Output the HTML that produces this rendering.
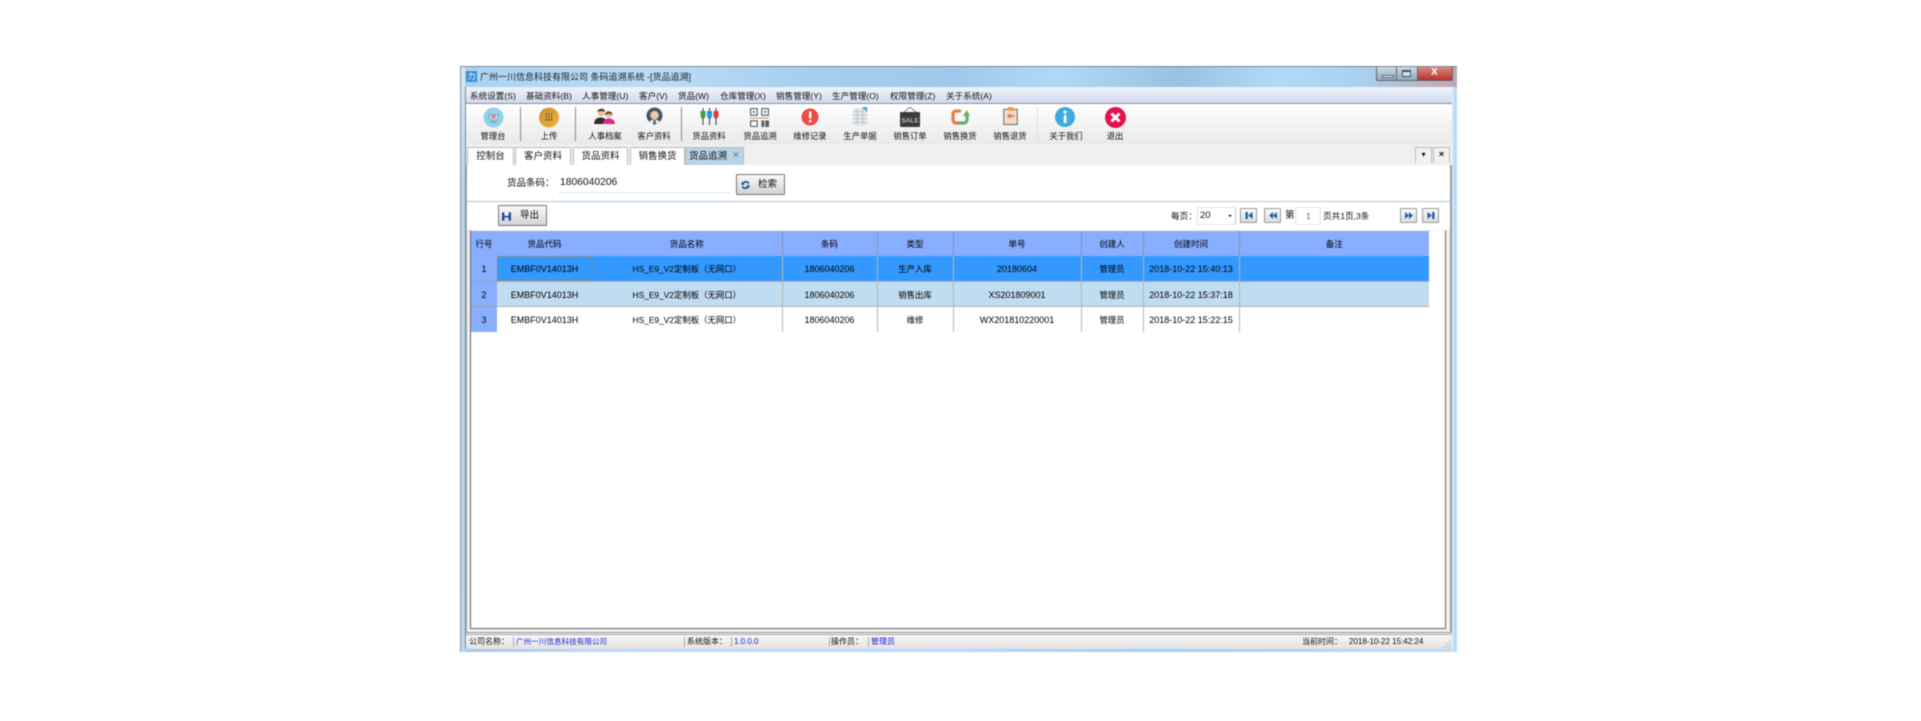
<!DOCTYPE html>
<html lang="zh">
<head>
<meta charset="utf-8">
<title>货品追溯</title>
<style>
html,body{margin:0;padding:0;background:#fff;width:1921px;height:721px;overflow:hidden}
body{font-family:"Liberation Sans","Noto Sans CJK SC",sans-serif;font-size:9px;color:#111;position:relative}
.a{position:absolute}
.t{position:absolute;white-space:nowrap;line-height:12px;font-size:8.6px}
.l{font-size:8.3px}
.s{font-size:8px}
.c{transform:translateX(-50%)}
.sep{position:absolute;width:1px;background:#888}
.tab{position:absolute;top:147px;height:18px;background:#fff;border:1px solid #bbb;border-bottom:none;box-sizing:border-box;text-align:center;line-height:18px;font-size:9.5px}
.btn{position:absolute;box-sizing:border-box;border:1px solid #777;border-radius:1px;background:linear-gradient(#fafafa,#d4d4d4)}
.pg{position:absolute;top:208px;width:17px;height:15px;box-sizing:border-box;border:1px solid #999;border-radius:1px;background:linear-gradient(#fafafa,#dcdcdc)}
svg{position:absolute;display:block}
#wrap{position:absolute;left:0;top:0;width:1921px;height:721px;filter:blur(.45px)}
table{position:absolute;left:471px;top:231px;border-collapse:collapse;table-layout:fixed;width:958px}
td,th{padding:0;text-align:center;font-weight:normal;font-size:9px;height:25px;box-sizing:border-box;white-space:nowrap;overflow:hidden;color:#000}
th{background:#8aaeff;border-right:1px solid #8892a8;font-size:8.5px}
th.n{border-right:none}
td{border-right:1px solid #b4b4b4;border-bottom:1px solid #b4b4b4;padding-top:2px}
td.k{font-size:8.4px}
td.r{background:#8aaeff;border-right:none;border-bottom:1px solid #999}
tr.s1 td{background:#3399ff}
tr.s1 td.r{background:#8aaeff}
tr.s2 td{background:#c0dcf0}
tr.s2 td.r{background:#8aaeff}
tr.s3 td{background:#fff;border-bottom:none;height:26px}
tr.s3 td.r{background:#8aaeff}
td.nb{border-right:none}
</style>
</head>
<body>
<div id="wrap">
<!-- window frame -->
<div class="a" style="left:460px;top:66px;width:997px;height:586px;background:#b5d9f8;border-top:1px solid #7a8a96;box-sizing:border-box"></div>
<div class="a" style="left:460px;top:67px;width:997px;height:20px;background:linear-gradient(90deg,#a8d3f4 0,#bcdcf6 20%,#a5cfef 35%,#9fc9ec 50%,#b2d8f7 60%,#98c2e2 72%,#b2d9f8 82%,#a8d2f2 90%,#c0a8ae 100%)"></div>
<div class="a" style="left:460px;top:67px;width:1px;height:585px;background:#8a9aa8"></div>
<div class="a" style="left:461px;top:67px;width:4px;height:585px;background:linear-gradient(#dbe6ee,#b6d4ec 20%,#b9d6ee)"></div>
<div class="a" style="left:465px;top:87px;width:1px;height:562px;background:#7c8a96"></div>
<div class="a" style="left:1452px;top:87px;width:5px;height:565px;background:linear-gradient(90deg,#e6f1fb,#b5d9f8 50%)"></div>
<div class="a" style="left:466px;top:649px;width:986px;height:3px;background:linear-gradient(90deg,#a8c8e4,#bcdcf8 15%,#b5d9f8 50%,#a8cfee 70%,#bcdcf8)"></div>

<!-- title -->
<div class="a" style="left:466px;top:71px;width:11px;height:11px;background:#3d8fd6;color:#fff;font-size:8px;line-height:11px;text-align:center">力</div>
<div class="t" style="left:480px;top:71px;font-size:9px;color:#222">广州一川信息科技有限公司 条码追溯系统 -[货品追溯]</div>
<!-- window buttons -->
<div class="a" style="left:1376px;top:67px;width:21px;height:14px;box-sizing:border-box;border:1px solid #666;border-top:none;border-radius:0 0 0 2px;background:linear-gradient(#c9dbe8,#8fa9bc)"></div>
<div class="a" style="left:1382px;top:75px;width:10px;height:1px;background:#fff;border:1px solid #567"></div>
<div class="a" style="left:1397px;top:67px;width:21px;height:14px;box-sizing:border-box;border:1px solid #666;border-top:none;border-left:none;background:linear-gradient(#c9dbe8,#8fa9bc)"></div>
<div class="a" style="left:1402px;top:70px;width:9px;height:7px;box-sizing:border-box;border:1px solid #456;border-top-width:2px;background:#cfe0ec"></div>
<div class="a" style="left:1418px;top:67px;width:35px;height:14px;box-sizing:border-box;border:1px solid #666;border-top:none;border-left:none;border-radius:0 0 2px 0;background:linear-gradient(#d98a84,#b8332c)"></div>
<div class="t" style="left:1431px;top:67px;font-size:10px;font-weight:bold;color:#fff">X</div>

<!-- client area -->
<div class="a" style="left:466px;top:87px;width:986px;height:562px;background:#f0f0f0"></div>

<!-- menu -->
<div class="a" style="left:466px;top:88px;width:986px;height:15px;background:linear-gradient(#eef2fa,#d3daee)"></div>
<div class="a" style="left:466px;top:103px;width:986px;height:1px;background:#8a8f98"></div>
<div class="t" style="left:470px;top:90px">系统设置(S)</div>
<div class="t" style="left:526px;top:90px">基础资料(B)</div>
<div class="t" style="left:582px;top:90px">人事管理(U)</div>
<div class="t" style="left:639px;top:90px">客户(V)</div>
<div class="t" style="left:678px;top:90px">货品(W)</div>
<div class="t" style="left:720px;top:90px">仓库管理(X)</div>
<div class="t" style="left:776px;top:90px">销售管理(Y)</div>
<div class="t" style="left:832px;top:90px">生产管理(O)</div>
<div class="t" style="left:890px;top:90px">权限管理(Z)</div>
<div class="t" style="left:946px;top:90px">关于系统(A)</div>

<!-- toolbar -->
<div class="a" style="left:466px;top:104px;width:986px;height:40px;background:linear-gradient(#fff,#e9e9e9)"></div>
<div class="sep" style="left:520px;top:107px;height:34px"></div>
<div class="sep" style="left:575px;top:107px;height:34px"></div>
<div class="sep" style="left:681px;top:107px;height:34px"></div>
<div class="sep" style="left:1037px;top:107px;height:34px;background:#ddd"></div>

<!-- icons -->
<svg style="left:483px;top:107px" width="21" height="21" viewBox="0 0 21 21"><circle cx="10.5" cy="10.5" r="10" fill="#8ed3ee"/><path d="M5.500 7.500h10l-1 5.500H7z" fill="#c0dcea" stroke="#7a9cb0" stroke-width=".8"/><circle cx="10.5" cy="9.500" r="2" fill="#e8748a"/><path d="M7 15h7" stroke="#7a9cb0" stroke-width="1.200"/></svg>
<svg style="left:539px;top:107px" width="20" height="21" viewBox="0 0 20 21"><defs><linearGradient id="g1" x1="0" y1="0" x2="1" y2="1"><stop offset="0" stop-color="#c4902c"/><stop offset="1" stop-color="#f5b53e"/></linearGradient></defs><circle cx="10" cy="10.5" r="10" fill="url(#g1)"/><path d="M7.500 5.500v7M10 5.500v7M12.500 5.500v7M6 13h8" stroke="#8a6420" stroke-width=".9" fill="none"/></svg>
<svg style="left:594px;top:108px" width="21" height="17" viewBox="0 0 22 18"><path d="M0 17c0-5 3-7 7-7s6 2 6 7z" fill="#2d2d2d"/><circle cx="7.500" cy="5" r="3.800" fill="#e8c0a0"/><path d="M3.500 4c0-4 8-4.500 8 0-3-1-5-1-8 0z" fill="#4a3324"/><path d="M9 17c0-4 3-6 6.500-6S22 13 22 17z" fill="#d42a8e"/><circle cx="15.500" cy="7" r="3.500" fill="#ecc4a4"/><path d="M11.500 8c0-6 8-6 8 0-2-2.500-5-2.500-8 0z" fill="#6b4423"/></svg>
<svg style="left:646px;top:107px" width="17" height="19" viewBox="0 0 18 20"><circle cx="9" cy="9" r="8.500" fill="#44586a"/><circle cx="9" cy="8.500" r="4.500" fill="#edc8a8"/><path d="M3 17c1-3 3-4 6-4s5 1 6 4c-3 2.500-9 2.500-12 0z" fill="#e4e8ec"/><path d="M8 13.500h2l.6 5H7.400z" fill="#4a6278"/></svg>
<svg style="left:700px;top:108px" width="19" height="17" viewBox="0 0 19 17"><path d="M3 0v17M9.500 0v17M16 0v17" stroke="#555" stroke-width="1.200"/><rect x=".5" y="3" width="5" height="6" fill="#3ca64a"/><rect x="7" y="3" width="5" height="6" fill="#1e98e8"/><rect x="13.500" y="3" width="5" height="6" fill="#e43a3a"/><path d="M1 9h4l-2 3zM7.500 9h4l-2 3zM14 9h4l-2 3z" fill="#666"/></svg>
<svg style="left:750px;top:108px" width="19" height="19" viewBox="0 0 20 20" fill="#56666c"><rect x=".6" y=".6" width="7" height="7" fill="none" stroke="#56666c" stroke-width="1.200"/><rect x="3" y="3" width="2" height="2"/><rect x="12.400" y=".6" width="7" height="7" fill="none" stroke="#56666c" stroke-width="1.200"/><rect x="15" y="3" width="2" height="2"/><rect x="0" y="10" width="20" height="1" fill="#c49a7a"/><rect x=".6" y="13.500" width="7" height="6" fill="none" stroke="#56666c" stroke-width="1.200"/><rect x="12" y="13" width="3" height="7"/><rect x="16" y="13" width="4" height="7"/></svg>
<svg style="left:801px;top:108px" width="18" height="18" viewBox="0 0 18 18"><circle cx="9" cy="9" r="8.500" fill="#ef4a44"/><rect x="8" y="3.500" width="2.400" height="7" fill="#fff"/><rect x="8" y="12" width="2.400" height="2.400" fill="#fff"/></svg>
<svg style="left:852px;top:107px" width="16" height="19" viewBox="0 0 18 21"><rect x="1" y="1" width="16" height="20" fill="#e6ebed"/><path d="M1 5h16M1 9h16M1 13h16M1 17h16M6 1v20M12 1v20" stroke="#b6c0c4" stroke-width="1"/><path d="M11 0h6v5z" fill="#3d9bd8"/></svg>
<svg style="left:900px;top:106px" width="20" height="21" viewBox="0 0 20 21"><path d="M10 1L3 7M10 1l7 6" stroke="#555" stroke-width=".8" fill="none"/><rect x="0" y="6" width="20" height="15" rx="1" fill="#3b3b3b"/><text x="10" y="16.500" font-family="Liberation Sans,sans-serif" font-size="6.500" font-weight="bold" text-anchor="middle" fill="#bbb">SALE</text></svg>
<svg style="left:951px;top:108px" width="19" height="18" viewBox="0 0 19 18"><path d="M10 3H5a3 3 0 0 0-3 3v6a3 3 0 0 0 3 3h2" fill="none" stroke="#ef7a45" stroke-width="3.200"/><path d="M7 15h6a3 3 0 0 0 3-3V7" fill="none" stroke="#68b06a" stroke-width="3.200"/><path d="M12 8l3.800-6L19 8z" fill="#68b06a"/></svg>
<svg style="left:1003px;top:107px" width="15" height="18" viewBox="0 0 16 20"><rect x=".5" y="2.500" width="15" height="17" fill="#ecdcc8" stroke="#6a5a4a"/><rect x="5" y="0" width="6" height="4" fill="#f0a030"/><path d="M4 10l4-3v2h4v2H8v2z" fill="#ef6a3a"/></svg>
<svg style="left:1055px;top:107px" width="20" height="20" viewBox="0 0 20 20"><circle cx="10" cy="10" r="10" fill="#3fa9e0"/><rect x="8.800" y="8" width="2.600" height="8" fill="#fff"/><circle cx="10" cy="5" r="1.600" fill="#fff"/></svg>
<svg style="left:1105px;top:107px" width="21" height="21" viewBox="0 0 21 21"><circle cx="10.500" cy="10.500" r="10.500" fill="#e5114f"/><path d="M6.500 6.500l8 8M14.500 6.500l-8 8" stroke="#fff" stroke-width="3"/></svg>

<!-- toolbar labels -->
<div class="t l c" style="left:493px;top:130px">管理台</div>
<div class="t l c" style="left:549px;top:130px">上传</div>
<div class="t l c" style="left:605px;top:130px">人事档案</div>
<div class="t l c" style="left:654px;top:130px">客户资料</div>
<div class="t l c" style="left:709px;top:130px">货品资料</div>
<div class="t l c" style="left:760px;top:130px">货品追溯</div>
<div class="t l c" style="left:810px;top:130px">维修记录</div>
<div class="t l c" style="left:860px;top:130px">生产单据</div>
<div class="t l c" style="left:910px;top:130px">销售订单</div>
<div class="t l c" style="left:960px;top:130px">销售换货</div>
<div class="t l c" style="left:1010px;top:130px">销售退货</div>
<div class="t l c" style="left:1066px;top:130px">关于我们</div>
<div class="t l c" style="left:1115px;top:130px">退出</div>

<!-- tabs -->
<div class="a" style="left:466px;top:144px;width:985px;height:21px;background:#f0f0f0"></div>
<div class="tab" style="left:467px;width:47px">控制台</div>
<div class="tab" style="left:515px;width:56px">客户资料</div>
<div class="tab" style="left:573px;width:55px">货品资料</div>
<div class="tab" style="left:630px;width:55px">销售换货</div>
<div class="tab" style="left:685px;width:59px;background:#b8d4e8;text-align:left;padding-left:3px">货品追溯<span style="position:absolute;left:47px;top:-1px;color:#7a8a98;font-size:10px;font-weight:bold">×</span></div>
<div class="tab" style="left:1415px;width:17px;height:16px;line-height:13px;background:#f2f2f2;font-size:8px">▾</div>
<div class="tab" style="left:1433px;width:17px;height:16px;line-height:14px;background:#f2f2f2;font-weight:bold">×</div>

<!-- panel -->
<div class="a" style="left:467px;top:165px;width:984px;height:36px;background:#fff"></div>
<div class="t" style="left:507px;top:178px;font-size:9.500px">货品条码：</div>
<div class="a" style="left:558px;top:175px;width:172px;height:18px;border-bottom:1px solid #dde6f0;box-sizing:border-box"></div>
<div class="t" style="left:560px;top:177px;font-size:10.300px">1806040206</div>
<div class="btn" style="left:736px;top:174px;width:49px;height:21px"></div>
<svg style="left:741px;top:181px" width="9" height="8" viewBox="0 0 10 10"><path d="M9 3A4 4 0 0 0 2 3M1 7a4 4 0 0 0 7 0" stroke="#1d4f9c" stroke-width="2.200" fill="none"/><path d="M0 1v4h4z" fill="#1d4f9c"/><path d="M10 9V5H6z" fill="#1d4f9c"/></svg>
<div class="t" style="left:758px;top:179px;font-size:9.500px">检索</div>

<div class="a" style="left:467px;top:201px;width:984px;height:1px;background:#a9c8e4"></div>
<div class="a" style="left:467px;top:202px;width:984px;height:28px;background:#fff"></div>
<div class="btn" style="left:498px;top:205px;width:49px;height:21px"></div>
<svg style="left:502px;top:212px" width="9" height="9" viewBox="0 0 11 10"><rect width="11" height="10" fill="#1d4f9c"/><rect x="3" y="0" width="5" height="4" fill="#fff"/><rect x="3" y="6" width="5" height="4" fill="#cfe0f0"/></svg>
<div class="t" style="left:520px;top:210px;font-size:9.500px">导出</div>

<!-- pager -->
<div class="t" style="left:1171px;top:210px">每页：</div>
<div class="a" style="left:1197px;top:207px;width:39px;height:18px;box-sizing:border-box;border:1px solid #e4e4e4;border-right-color:#ccc"></div>
<div class="t" style="left:1200px;top:210px;font-size:9.500px">20</div>
<div class="a" style="left:1228px;top:215px;border-left:2px solid transparent;border-right:2px solid transparent;border-top:2px solid #222"></div>
<div class="pg" style="left:1240px"></div>
<svg style="left:1245px;top:212px" width="8" height="7" viewBox="0 0 9 9" fill="#1f5aa8"><rect width="3" height="9"/><path d="M9 0v9L3.500 4.500z"/></svg>
<div class="pg" style="left:1264px"></div>
<svg style="left:1269px;top:212px" width="8" height="7" viewBox="0 0 10 9" fill="#1f5aa8"><path d="M5 0v9L0 4.500zM10 0v9L5 4.500z"/></svg>
<div class="t" style="left:1285px;top:210px;font-size:9.500px">第</div>
<div class="a" style="left:1295px;top:207px;width:26px;height:18px;box-sizing:border-box;border:1px solid #e4e4e4"></div>
<div class="t" style="left:1306px;top:210px;color:#3a6ea8">1</div>
<div class="t" style="left:1323px;top:210px">页共1页,3条</div>
<div class="pg" style="left:1400px"></div>
<svg style="left:1405px;top:212px" width="8" height="7" viewBox="0 0 10 9" fill="#1f5aa8"><path d="M0 0v9l5-4.500zM5 0v9l5-4.500z"/></svg>
<div class="pg" style="left:1422px"></div>
<svg style="left:1427px;top:212px" width="8" height="7" viewBox="0 0 9 9" fill="#1f5aa8"><path d="M0 0v9l5.500-4.500z"/><rect x="6" width="3" height="9"/></svg>

<!-- grid frame -->
<div class="a" style="left:470px;top:230px;width:976px;height:399px;box-sizing:border-box;background:#fff;border:1px solid #666;border-top:1px solid #eee"></div>
<div class="a" style="left:466px;top:165px;width:1px;height:468px;background:#aaa"></div>
<div class="a" style="left:1450px;top:165px;width:2px;height:468px;background:#999"></div>
<div class="a" style="left:466px;top:632px;width:986px;height:1px;background:#999"></div>
<div class="a" style="left:466px;top:634px;width:986px;height:1px;background:#aaa"></div>

<table>
<colgroup><col style="width:26px"><col style="width:95px"><col style="width:190px"><col style="width:95px"><col style="width:76px"><col style="width:128px"><col style="width:62px"><col style="width:96px"><col style="width:190px"></colgroup>
<tr><th class="n">行号</th><th class="n">货品代码</th><th>货品名称</th><th>条码</th><th>类型</th><th>单号</th><th>创建人</th><th>创建时间</th><th class="n">备注</th></tr>
<tr class="s1"><td class="r">1</td><td class="nb">EMBF0V14013H</td><td class="k">HS_E9_V2定制板（无网口）</td><td>1806040206</td><td class="k">生产入库</td><td>20180604</td><td class="k">管理员</td><td>2018-10-22 15:40:13</td><td class="nb"></td></tr>
<tr class="s2"><td class="r">2</td><td class="nb">EMBF0V14013H</td><td class="k">HS_E9_V2定制板（无网口）</td><td>1806040206</td><td class="k">销售出库</td><td>XS201809001</td><td class="k">管理员</td><td>2018-10-22 15:37:18</td><td class="nb"></td></tr>
<tr class="s3"><td class="r">3</td><td class="nb">EMBF0V14013H</td><td class="k">HS_E9_V2定制板（无网口）</td><td>1806040206</td><td class="k">维修</td><td>WX201810220001</td><td class="k">管理员</td><td>2018-10-22 15:22:15</td><td class="nb"></td></tr>
</table>
<div class="a" style="left:497px;top:256px;width:95px;height:25px;box-sizing:border-box;border:1px dashed #b0804a"></div>

<!-- status bar -->
<div class="a" style="left:466px;top:635px;width:986px;height:14px;background:linear-gradient(#f8f8f8,#e2e2e2)"></div>
<div class="t s" style="left:469px;top:636px">公司名称：</div>
<div class="sep" style="left:513px;top:637px;height:10px;background:#aaa"></div>
<div class="t" style="left:516px;top:636px;color:#1a1ae0;font-size:7.600px">广州一川信息科技有限公司</div>
<div class="sep" style="left:684px;top:637px;height:10px;background:#aaa"></div>
<div class="t s" style="left:687px;top:636px">系统版本：</div>
<div class="sep" style="left:731px;top:637px;height:10px;background:#aaa"></div>
<div class="t s" style="left:734px;top:636px;color:#1a1ae0">1.0.0.0</div>
<div class="sep" style="left:829px;top:637px;height:10px;background:#aaa"></div>
<div class="t s" style="left:831px;top:636px">操作员：</div>
<div class="sep" style="left:868px;top:637px;height:10px;background:#aaa"></div>
<div class="t s" style="left:871px;top:636px;color:#1a1ae0">管理员</div>
<div class="t s" style="left:1302px;top:636px">当前时间：</div>
<div class="t s" style="left:1349px;top:636px">2018-10-22 15:42:24</div>
<svg style="left:1443px;top:640px" width="8" height="8" viewBox="0 0 8 8" fill="#bbb"><rect x="6" y="0" width="1.500" height="1.500"/><rect x="3" y="3" width="1.500" height="1.500"/><rect x="6" y="3" width="1.500" height="1.500"/><rect x="0" y="6" width="1.500" height="1.500"/><rect x="3" y="6" width="1.500" height="1.500"/><rect x="6" y="6" width="1.500" height="1.500"/></svg>
</div>
</body>
</html>
